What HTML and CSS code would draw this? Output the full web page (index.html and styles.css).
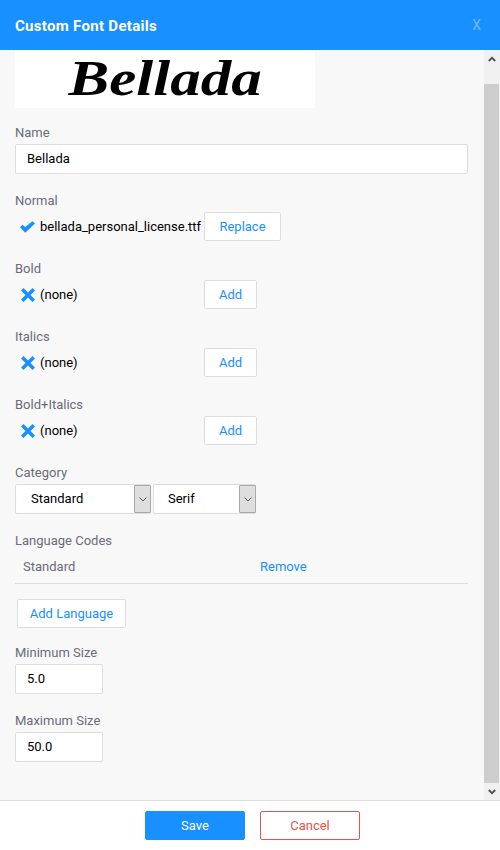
FILE: index.html
```html
<!DOCTYPE html>
<html lang="en">
<head>
  <meta charset="UTF-8" />
  <title>Custom Font Details</title>
  <link rel="stylesheet" href="styles.css">
</head>
<body>
  <div class="dialog">
    <header class="dialog-head">
      <h1>Custom Font Details</h1>
      <span class="close">X</span>
    </header>
    <div class="dialog-middle">
      <main class="dialog-body" id="dialogBody">
        <div class="preview"><span>Bellada</span></div>

        <div class="group">
          <label>Name</label>
          <input class="input input-wide" type="text" value="Bellada" />
        </div>

        <div class="group">
          <label>Normal</label>
          <div class="file-row">
            <svg class="icon icon-check" viewBox="1 0.4 14.6 11"><path d="M1 6 L3.4 3.6 L6 6 L13.2 0.4 L15.6 2.6 L6 11.4 Z" /></svg>
            <span class="file-name">bellada_personal_license.ttf</span>
            <button class="btn btn-replace">Replace</button>
          </div>
        </div>

        <div class="group">
          <label>Bold</label>
          <div class="file-row">
            <svg class="icon icon-cross" viewBox="1 1 14 14"><path d="M1 3.5 L3.5 1 L8 5.5 L12.5 1 L15 3.5 L10.5 8 L15 12.5 L12.5 15 L8 10.5 L3.5 15 L1 12.5 L5.5 8 Z" /></svg>
            <span class="file-name">(none)</span>
            <button class="btn">Add</button>
          </div>
        </div>

        <div class="group">
          <label>Italics</label>
          <div class="file-row">
            <svg class="icon icon-cross" viewBox="1 1 14 14"><path d="M1 3.5 L3.5 1 L8 5.5 L12.5 1 L15 3.5 L10.5 8 L15 12.5 L12.5 15 L8 10.5 L3.5 15 L1 12.5 L5.5 8 Z" /></svg>
            <span class="file-name">(none)</span>
            <button class="btn">Add</button>
          </div>
        </div>

        <div class="group">
          <label>Bold+Italics</label>
          <div class="file-row">
            <svg class="icon icon-cross" viewBox="1 1 14 14"><path d="M1 3.5 L3.5 1 L8 5.5 L12.5 1 L15 3.5 L10.5 8 L15 12.5 L12.5 15 L8 10.5 L3.5 15 L1 12.5 L5.5 8 Z" /></svg>
            <span class="file-name">(none)</span>
            <button class="btn">Add</button>
          </div>
        </div>

        <div class="group">
          <label>Category</label>
          <div class="select-row">
            <div class="select select-type">
              <select><option>Standard</option></select>
              <span class="select-arrow"><svg viewBox="0 0 8 5"><path d="M0.5 0.5 L4 4 L7.5 0.5" /></svg></span>
            </div>
            <div class="select select-style">
              <select><option>Serif</option></select>
              <span class="select-arrow"><svg viewBox="0 0 8 5"><path d="M0.5 0.5 L4 4 L7.5 0.5" /></svg></span>
            </div>
          </div>
        </div>

        <div class="group languages">
          <label>Language Codes</label>
          <div class="lang-row">
            <span class="lang-name">Standard</span>
            <a href="#" class="link">Remove</a>
          </div>
          <button class="btn btn-lang">Add Language</button>
        </div>

        <div class="group">
          <label>Minimum Size</label>
          <input class="input input-small" type="text" value="5.0" />
        </div>

        <div class="group">
          <label>Maximum Size</label>
          <input class="input input-small" type="text" value="50.0" />
        </div>
      </main>
      <div class="scrollbar">
        <div class="scroll-btn"><svg viewBox="0 0 8 6"><path d="M0.8 5 L4 1.8 L7.2 5" /></svg></div>
        <div class="scroll-track"><div class="scroll-thumb"></div></div>
        <div class="scroll-btn"><svg viewBox="0 0 8 6"><path d="M0.8 1 L4 4.2 L7.2 1" /></svg></div>
      </div>
    </div>
    <footer class="dialog-foot">
      <button class="btn-save">Save</button>
      <button class="btn-cancel">Cancel</button>
    </footer>
  </div>
  <script src="script.js"></script>
</body>
</html>
```

FILE: styles.css
```css
:root {
  --blue: #1890ff;
  --red: #e8524a;
  --line: #dddddd;
  --label: #6b6b7b;
}
* { box-sizing: border-box; }
html, body { height: 100%; }
body {
  margin: 0;
  font-family: Roboto, "Liberation Sans", sans-serif;
  font-size: 13px;
  color: #000;
  background: #fff;
  overflow: hidden;
}
.dialog {
  display: flex;
  flex-direction: column;
  height: 850px;
}
.dialog-head {
  flex: 0 0 50px;
  display: flex;
  align-items: center;
  justify-content: space-between;
  padding: 0 19px 0 15px;
  background: var(--blue);
  color: #fff;
}
.dialog-head h1 {
  margin: 2px 0 0;
  font-size: 15px;
  font-weight: bold;
  letter-spacing: 0.3px;
}
.close {
  font-size: 14px;
  color: rgba(255, 255, 255, 0.4);
}
.dialog-middle {
  flex: 1;
  display: flex;
  min-height: 0;
}
.dialog-body {
  flex: 1;
  overflow-y: scroll;
  scrollbar-width: none;
  padding: 0 16px 38px 15px;
  background: #f8f8f8;
}
.scrollbar {
  flex: 0 0 16px;
  display: flex;
  flex-direction: column;
  background: #f0f0f0;
}
.scroll-btn {
  flex: 0 0 17px;
  display: flex;
  align-items: center;
  justify-content: center;
}
.scroll-btn svg {
  width: 8px;
  height: 6px;
  fill: none;
  stroke: #505050;
  stroke-width: 1.8;
}
.scroll-track {
  flex: 1;
  display: flex;
  flex-direction: column;
  justify-content: flex-end;
}
.scroll-thumb {
  height: 699px;
  margin-right: 1px;
  background: #cdcdcd;
}
.preview {
  display: flex;
  justify-content: center;
  align-items: flex-start;
  width: 300px;
  height: 76px;
  padding-top: 18px;
  background: #fff;
}
.preview span {
  font-family: "Liberation Serif", serif;
  font-size: 50px;
  line-height: 56px;
  font-style: italic;
  font-weight: bold;
  transform: scaleX(1.22);
}
.group { margin-bottom: 18px; }
.preview + .group { margin-top: 16px; }
.group:last-child { margin-bottom: 0; }
label {
  display: block;
  height: 20px;
  line-height: 18px;
  color: var(--label);
}
.input {
  display: block;
  height: 30px;
  padding: 0 11px 2px;
  background: #fff;
  border: 1px solid var(--line);
  border-radius: 2px;
  font: inherit;
  color: #000;
  outline: none;
}
.input-wide { width: 453px; }
.input-small { width: 88px; }
.file-row {
  display: flex;
  align-items: center;
  height: 30px;
  padding-bottom: 1px;
}
.icon {
  fill: var(--blue);
  flex: none;
}
.icon-check {
  width: 15px;
  height: 12px;
  margin: 1px 5px 0;
}
.icon-cross {
  width: 14px;
  height: 14px;
  margin: 0 5px 0 6px;
}
.file-name { flex: 0 0 164px; }
.btn {
  height: 29px;
  padding: 0 14px;
  background: #fff;
  border: 1px solid var(--line);
  border-radius: 2px;
  color: var(--blue);
  font: inherit;
}
.btn-replace {
  width: 77px;
  padding: 0;
}
.select-row {
  display: flex;
  gap: 2px;
}
.select {
  position: relative;
  height: 30px;
}
.select-type { width: 136px; }
.select-style { width: 103px; }
.select select {
  width: 100%;
  height: 100%;
  padding: 0 0 2px 15px;
  appearance: none;
  background: #fff;
  border: 1px solid var(--line);
  border-radius: 2px;
  font: inherit;
  color: #000;
}
.select-style select { padding-left: 14px; }
.select-arrow {
  position: absolute;
  top: 1px;
  right: 0;
  bottom: 1px;
  width: 17px;
  display: flex;
  align-items: center;
  justify-content: center;
  background: #dedede;
  border: 1px solid #a9a9a9;
  border-radius: 1px;
}
.select-arrow svg {
  width: 8px;
  height: 5px;
  fill: none;
  stroke: #555;
  stroke-width: 1;
}
.languages { margin-bottom: 16px; }
.lang-row {
  display: flex;
  align-items: center;
  height: 32px;
  padding: 0 0 2px 8px;
  border-bottom: 1px solid var(--line);
}
.lang-name {
  flex: 0 0 237px;
  color: var(--label);
}
.link {
  color: var(--blue);
  text-decoration: none;
}
.btn-lang {
  display: block;
  margin: 15px 0 0 2px;
  width: 109px;
  padding: 0;
}
.dialog-foot {
  flex: 0 0 50px;
  display: flex;
  justify-content: center;
  gap: 15px;
  padding: 10px 0 0 5px;
  border-top: 1px solid var(--line);
  background: #fff;
}
.btn-save, .btn-cancel {
  width: 100px;
  height: 29px;
  border-radius: 2px;
  font: inherit;
}
.btn-save {
  background: var(--blue);
  border: 1px solid var(--blue);
  color: #fff;
}
.btn-cancel {
  background: #fff;
  border: 1px solid var(--red);
  color: var(--red);
}
```

FILE: script.js
```js
var body = document.getElementById('dialogBody');
body.scrollTop = body.scrollHeight;
```
